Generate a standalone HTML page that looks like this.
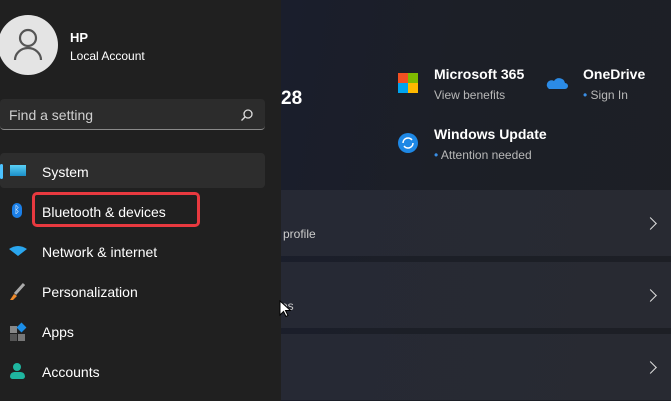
<!DOCTYPE html>
<html><head><style>
*{margin:0;padding:0;box-sizing:border-box}
body{width:671px;height:401px;overflow:hidden;background:#202020;font-family:"Segoe UI","Liberation Sans",sans-serif;color:#fff;position:relative}
.abs{position:absolute}
.right{left:281px;top:0;width:390px;height:401px;background:linear-gradient(100deg,#1a1e2c 0%,#1c1f27 40%,#1d1f25 100%)}
.card{left:281px;width:390px;height:66px;background:linear-gradient(100deg,#262934,#282a32)}
.nav{left:42px;font-size:14px;color:#fff}
.chev{right:16px;width:9px;height:9px;border-right:1.6px solid #ddd;border-top:1.6px solid #ddd;transform:rotate(45deg)}
.sub{font-size:12px;color:#b8b8b8}
</style></head><body>
<div class="abs right"></div>
<div class="abs" style="left:281px;top:88px;font-size:19px;font-weight:bold">28</div>
<div class="abs" style="left:398px;top:73px;width:10px;height:10px;background:#f25022"></div>
<div class="abs" style="left:408px;top:73px;width:10px;height:10px;background:#7fba00"></div>
<div class="abs" style="left:398px;top:83px;width:10px;height:10px;background:#00a4ef"></div>
<div class="abs" style="left:408px;top:83px;width:10px;height:10px;background:#ffb900"></div>
<div class="abs" style="left:434px;top:66px;font-size:14px;font-weight:bold">Microsoft 365</div>
<div class="abs sub" style="left:434px;top:88px">View benefits</div>
<svg class="abs" style="left:546px;top:75px" width="22" height="16"><path d="M3 14h16a3 3 0 0 0 0-6 6 6 0 0 0-11-2 4 4 0 0 0-5 8z" fill="#2b8be6"/></svg>
<div class="abs" style="left:583px;top:66px;font-size:14px;font-weight:bold">OneDrive</div>
<div class="abs sub" style="left:583px;top:88px"><span style="color:#3a8fe6">•</span> Sign In</div>
<svg class="abs" style="left:398px;top:133px" width="20" height="20"><circle cx="10" cy="10" r="10" fill="#1e88e5"/><path d="M5 10a5 5 0 0 1 9-3M15 10a5 5 0 0 1-9 3" stroke="#fff" stroke-width="1.5" fill="none"/></svg>
<div class="abs" style="left:434px;top:126px;font-size:14px;font-weight:bold">Windows Update</div>
<div class="abs sub" style="left:434px;top:148px"><span style="color:#3a8fe6">•</span> Attention needed</div>
<div class="abs card" style="top:190px"></div>
<div class="abs card" style="top:262px"></div>
<div class="abs card" style="top:334px"></div>
<div class="abs sub" style="left:283px;top:227px;color:#ccc">profile</div>
<div class="abs sub" style="left:281px;top:299px;color:#ccc">es</div>
<div class="abs chev" style="top:219px"></div>
<div class="abs chev" style="top:291px"></div>
<div class="abs chev" style="top:363px"></div>
<div class="abs" style="left:0;top:0;width:281px;height:401px;background:#202020"></div>
<div class="abs" style="left:-2px;top:15px;width:60px;height:60px;border-radius:50%;background:#e4e4e4"></div>
<svg class="abs" style="left:12px;top:28px" width="32" height="34"><circle cx="16" cy="10" r="8" fill="none" stroke="#555" stroke-width="2.2"/><path d="M3 32a13 12 0 0 1 26 0" fill="none" stroke="#555" stroke-width="2.2"/></svg>
<div class="abs" style="left:70px;top:30px;font-size:13px;font-weight:bold">HP</div>
<div class="abs" style="left:70px;top:49px;font-size:12px">Local Account</div>
<div class="abs" style="left:0;top:99px;width:265px;height:31px;background:#2c2c2c;border-radius:4px;border-bottom:1px solid #8a8a8a"></div>
<div class="abs" style="left:9px;top:107px;font-size:14px;color:#d0d0d0">Find a setting</div>
<svg class="abs" style="left:240px;top:108px" width="14" height="14"><circle cx="8" cy="6" r="4" fill="none" stroke="#ddd" stroke-width="1.3"/><path d="M5 9l-3.5 3.5" stroke="#ddd" stroke-width="1.3"/></svg>
<div class="abs" style="left:0;top:153px;width:265px;height:35px;background:#2d2d2d;border-radius:4px"></div>
<div class="abs" style="left:0;top:164px;width:3px;height:15px;background:#4cc2ff;border-radius:2px"></div>
<div class="abs" style="left:10px;top:165px;width:16px;height:11px;background:linear-gradient(#5ad0f5,#1b8ec8)"></div>
<div class="abs" style="left:32px;top:192px;width:168px;height:35px;border:3px solid #e8393f;border-radius:5px"></div>
<div class="abs" style="left:12px;top:203px;width:10px;height:15px;border-radius:5px;background:#1a7fe8;color:#fff;font-size:10px;text-align:center;line-height:15px">ᛒ</div>
<svg class="abs" style="left:9px;top:246px" width="18" height="10"><path d="M0 3Q9-3 18 3L9 10z" fill="#2aa6ee"/></svg>
<svg class="abs" style="left:9px;top:283px" width="16" height="18"><path d="M15 1L6 11" stroke="#aaa" stroke-width="3"/><path d="M5 11l3 2-4 4-3 0z" fill="#ef8a2a"/></svg>
<div class="abs" style="left:10px;top:326px;width:7px;height:7px;background:#888"></div>
<div class="abs" style="left:10px;top:334px;width:7px;height:7px;background:#555"></div>
<div class="abs" style="left:18px;top:334px;width:7px;height:7px;background:#777"></div>
<div class="abs" style="left:18px;top:324px;width:7px;height:7px;background:#1b8ee8;transform:rotate(45deg)"></div>
<div class="abs" style="left:13px;top:363px;width:8px;height:8px;border-radius:50%;background:#1fb6a0"></div>
<div class="abs" style="left:10px;top:372px;width:15px;height:7px;border-radius:5px 5px 3px 3px;background:#1fb6a0"></div>
<div class="abs nav" style="top:164px">System</div>
<div class="abs nav" style="top:204px">Bluetooth &amp; devices</div>
<div class="abs nav" style="top:244px">Network &amp; internet</div>
<div class="abs nav" style="top:284px">Personalization</div>
<div class="abs nav" style="top:324px">Apps</div>
<div class="abs nav" style="top:364px">Accounts</div>
<svg class="abs" style="left:279px;top:300px" width="12" height="18"><path d="M1 1v14l3.5-3.5 2.5 5 2-1-2.5-5h5z" fill="#fff" stroke="#000" stroke-width="1"/></svg>
</body></html>
